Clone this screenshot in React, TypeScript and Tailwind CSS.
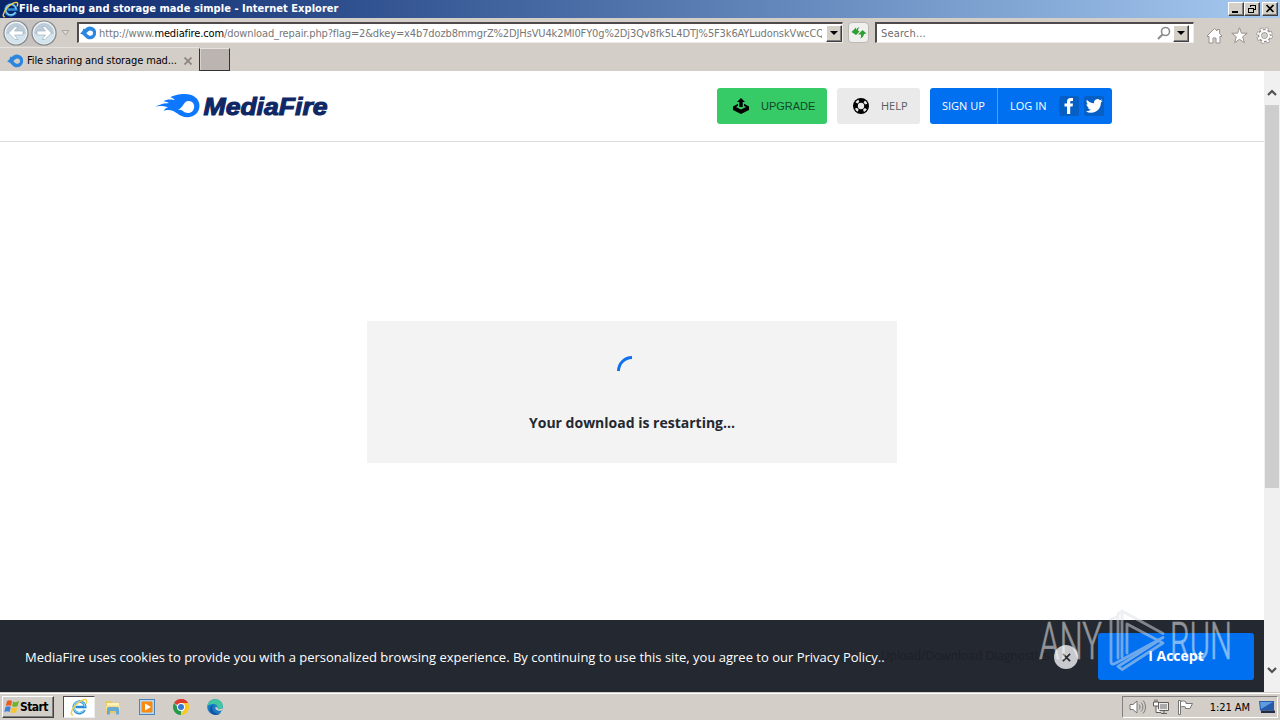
import React from 'react';

const TAHOMA = "font-['DejaVu_Sans_Condensed','DejaVu_Sans',sans-serif] [font-stretch:condensed]";

const IeIcon = ({ className }: { className?: string }) => (
  <svg viewBox="0 0 18 18" className={className} fill="none">
    <path d="M14.6 12A5.800 5.800 0 1 1 15.200 9H5.500" stroke="#2b8ad6" strokeWidth="2.600" />
    <path d="M14.3 11.8A5.600 5.600 0 1 1 15 8.800" stroke="#8ad4f8" strokeWidth="1.200" />
    <path d="M3.2 16.8C.2 17.2.7 12.8 5 7.8 9.6 2.6 15.3.3 16.4 2.2c.5.9.1 2.200-.6 3.600" stroke="#f2d24a" strokeWidth="1.500" />
  </svg>
);

const FlameIcon = ({ className }: { className?: string }) => (
  <svg viewBox="0 0 16 14" className={className}>
    <path
      fill="#2b86e0"
      fillRule="evenodd"
      d="M0 7.500C2.500 6 3 4 3.500 2.500L5 3C6 1.500 8 .5 9.800.5a6.300 6.300 0 1 1 0 12.800C6 13.300 5 10 2.500 8.500ZM6 7c1 0 1.800 2.800 4.300 2.800a2.700 2.700 0 1 0 0-5.400C8.500 4.400 7.500 6.500 6 7Z"
    />
  </svg>
);

const BackArrow = ({ flip }: { flip?: boolean }) => (
  <svg viewBox="0 0 26 26" className={flip ? 'w-[26px] h-[26px] -scale-x-100' : 'w-[26px] h-[26px]'}>
    <circle cx="13" cy="13" r="12" fill="#eef2f5" stroke="#85898f" strokeWidth="1.200" />
    <circle cx="13" cy="13" r="10" fill="#bccbd8" />
    <path d="M3 14a10 10 0 0 0 20 0Z" fill="#d3e4ec" />
    <path d="M5.500 13l6.500-6.500h3L11.500 11H20v4h-8.500l3.500 4.500h-3Z" fill="#fff" stroke="#a0b2c2" strokeWidth=".7" />
  </svg>
);

const DropButton = () => (
  <div className="w-4 h-[17px] shrink-0 bg-[#d4d0c8] border border-t-white border-l-white border-r-[#404040] border-b-[#404040] flex items-center justify-center shadow-[inset_-1px_-1px_0_#808080]">
    <svg viewBox="0 0 8 4" className="w-2 h-1">
      <path d="M0 0h8L4 4Z" fill="#000" />
    </svg>
  </div>
);

const WindowButton = ({ children }: { children: React.ReactNode }) => (
  <div className="w-4 h-3.5 bg-[#d4d0c8] border border-t-white border-l-white border-r-[#404040] border-b-[#404040] shadow-[inset_-1px_-1px_0_#808080]">
    <svg viewBox="0 0 14 12" className="w-3.5 h-3" fill="none" stroke="#000">
      {children}
    </svg>
  </div>
);

const TitleBar = () => (
  <div className="h-[18px] flex items-center pl-0.5 pr-0.5 bg-gradient-to-r from-[#0a246a] to-[#a6caf0]">
    <IeIcon className="w-[17px] h-[17px]" />
    <span className={`${TAHOMA} font-bold text-[11px] text-white whitespace-nowrap tracking-[0.035px] mt-px`}>
      File sharing and storage made simple - Internet Explorer
    </span>
    <div className="ml-auto flex">
      <WindowButton><path d="M3 9h6" strokeWidth="2" /></WindowButton>
      <WindowButton>
        <path d="M5.500 4V2.500h5v4H9M5 2h6M3.500 5.500h5v4h-5ZM3 5h6" shapeRendering="crispEdges" />
      </WindowButton>
      <span className="w-0.5" />
      <WindowButton><path d="M3.500 2l7 7M10.500 2l-7 7" strokeWidth="1.700" /></WindowButton>
    </div>
  </div>
);

const NavBar = () => (
  <div className={`h-[29px] flex items-center pl-[3px] bg-[#d4cec8] ${TAHOMA} text-[11px]`}>
    <div className="flex gap-0.5 rounded-full bg-[#c6c2bf] mt-px">
      <BackArrow />
      <BackArrow flip />
    </div>
    <svg viewBox="0 0 9 6" className="w-[9px] h-1.5 mx-1">
      <path d="M1 .5h7L4.500 5Z" fill="#ddd9d5" stroke="#aaa5a0" />
    </svg>
    <div className="w-[766px] h-[21px] ml-[3px] shrink-0 flex items-center bg-white border-t-2 border-l-2 border-t-[#504a4c] border-l-[#504a4c] border-b border-r border-b-[#efebe6] border-r-[#efebe6]">
      <FlameIcon className="w-4 h-3.5 ml-px mr-[3px] shrink-0" />
      <span className="mt-0.5 w-[723px] overflow-hidden whitespace-nowrap text-[#777] tracking-[-0.125px]">
        http://www.<span className="text-black">mediafire.com</span>
        /download_repair.php?flag=2&amp;dkey=x4b7dozb8mmgrZ%2DJHsVU4k2Ml0FY0g%2Dj3Qv8fk5L4DTJ%5F3k6AYLudonskVwcCQ
      </span>
      <div className="ml-auto"><DropButton /></div>
    </div>
    <div className="w-[21px] h-[21px] ml-[5px] shrink-0 rounded-sm border border-[#bcb7b2] bg-[#f0f0ee] flex items-center justify-center">
      <svg viewBox="0 0 16 14" className="w-4 h-3.5" fill="#2f9e33">
        <path d="M.5 6.500L5 2V4.500Q6 2 8.500 1.500Q6.500 3.500 7 5L8.500 6L5 9.500Z" transform="translate(0 -.5)" />
        <path d="M7 8.500L11.500 4L15.500 7.500L13 8Q12.500 11.500 9 12.500Q10.500 10.500 10 8.500Z" />
      </svg>
    </div>
    <div className="w-[319px] h-[21px] ml-1.5 shrink-0 flex items-center bg-white border-t-2 border-l-2 border-t-[#504a4c] border-l-[#504a4c] border-b border-r border-b-[#efebe6] border-r-[#efebe6]">
      <span className="ml-1 mt-0.5 text-[#6d6d6d] tracking-[0.15px]">Search...</span>
      <svg viewBox="0 0 14 14" className="w-3.5 h-3.5 ml-auto mr-0.5" fill="none" stroke="#8c8c8c">
        <circle cx="8.500" cy="5.500" r="4" strokeWidth="1.600" />
        <path d="M5.500 8.500L1 13" strokeWidth="2.200" />
      </svg>
      <DropButton />
      <span className="w-1" />
    </div>
    <div className="ml-3 mt-1.5 flex gap-2">
      <svg viewBox="0 0 17 17" className="w-[17px] h-[17px]" fill="#fff" stroke="#999391">
        <path d="M1 9l7.500-7.500L11 4V2.500h2.500V6.500L16 9l-1 1-1-1v7h-4v-5H7v5H3V9l-1 1Z" />
      </svg>
      <svg viewBox="0 0 17 17" className="w-[17px] h-[17px]" fill="#fff" stroke="#999391">
        <path d="M8.500.8l2 5.400h5.700l-4.500 3.500 1.600 6-4.800-3.400-4.800 3.400 1.600-6L.8 6.200h5.700Z" />
      </svg>
      <svg viewBox="0 0 17 17" className="w-[17px] h-[17px]" fill="none">
        <circle cx="8.500" cy="8.500" r="6.500" stroke="#999391" strokeWidth="3.500" strokeDasharray="3.100 2" />
        <circle cx="8.500" cy="8.500" r="4.600" stroke="#8a8482" strokeWidth="4" />
        <circle cx="8.500" cy="8.500" r="6.300" stroke="#fff" strokeWidth="2.400" strokeDasharray="2.300 2.650" strokeDashoffset="-.3" />
        <circle cx="8.500" cy="8.500" r="4.300" stroke="#fff" strokeWidth="2.200" />
        <circle cx="8.500" cy="8.500" r="2.300" fill="#d4cec8" />
      </svg>
    </div>
  </div>
);

const TabRow = () => (
  <div className={`h-6 flex bg-[#d4cec8] border-b border-[#d4cec8] ${TAHOMA} text-[11px]`}>
    <div className="w-[199px] flex items-center pl-[7px] border-t border-[#e6e2de]">
      <FlameIcon className="w-4 h-3.5 mr-1 mt-[3px]" />
      <span className="mt-1 text-black whitespace-nowrap tracking-[-0.12px]">File sharing and storage mad...</span>
      <svg viewBox="0 0 8 8" className="w-2 h-2 ml-auto mr-[7px] mt-[3px]">
        <path d="M.5.5l7 7M7.500.5l-7 7" stroke="#8b8583" strokeWidth="1.800" />
      </svg>
    </div>
    <div className="w-[31px] h-[23px] mt-px bg-[#bcb4b0] border border-[#333] border-t-[#e6e2de] shadow-[inset_1px_0_0_#d8d2ce]" />
  </div>
);

const Logo = () => (
  <svg viewBox="0 0 176 26" className="w-44 h-[26px] overflow-visible">
    <path
      fill="#0d78ff"
      fillRule="evenodd"
      d="M0 13.500C4 12.200 8 10 12.500 10.200c1 .1 1.400-.3.500-.8-1.700-.9-3.500-1-5-.7C12 6 15.500 6.500 19 7c.8 0 .5-.6-.4-1.300-1-.7-2.200-1.200-3.400-1.500C19 2.600 23 1 30 1c8 0 14.500 4.500 14.500 11.800 0 6.500-5.200 11.400-12 11.400-9.500 0-11-7.200-19.500-7.200-1.800 0-3 .4-4.200.8.8-2 2.500-3 4.300-3.500C9 13 4 12.500 0 13.500Zm22.500 3c5.500-.2 6 3.500 10.500 3.500 3.600 0 6.200-3 6.200-6.600 0-3.300-2.500-5.500-5.700-5.500-5.500 0-5 7.600-11 8.600Z"
    />
    <text
      x="48.500"
      y="22"
      textLength="124"
      lengthAdjust="spacingAndGlyphs"
      fontFamily="Liberation Sans, sans-serif"
      fontWeight="700"
      fontStyle="italic"
      fontSize="24.500"
      fill="#0f2765"
      stroke="#0f2765"
      strokeWidth="1.100"
    >
      MediaFire
    </text>
  </svg>
);

const SiteHeader = () => (
  <div className="h-[71px] shrink-0 flex items-center border-b border-[#dcdcdc] bg-white pl-[155px] pr-[152px] text-[11px]">
    <Logo />
    <div className="ml-auto flex gap-2.5 h-9">
      <div className="w-[110px] rounded-[3px] bg-[#37cb68] text-[#12462a] flex items-center pl-4 font-['Liberation_Sans',sans-serif]">
        <svg viewBox="0 0 16 16" className="w-4 h-4 mr-3" fill="#000">
          <path d="M8 0l4 4H9.700v5H6.300V4H4Z" />
          <path d="M5 5.800L0 8.500V12l8 4 8-4V8.500l-5-2.700v2L13 9l-5 2.500L3 9l2-1.200Z" />
        </svg>
        UPGRADE
      </div>
      <div className="w-[83px] rounded-[3px] bg-[#eaeaea] text-[#565b63] flex items-center pl-4 font-['Open_Sans',sans-serif]">
        <svg viewBox="0 0 16 16" className="w-4 h-4 mr-3" fill="none">
          <circle cx="8" cy="8" r="8" fill="#000" />
          <circle cx="8" cy="8" r="5.500" stroke="#eaeaea" strokeWidth="2.400" strokeDasharray="3 5.639" strokeDashoffset="-2.800" />
          <circle cx="8" cy="8" r="3.200" fill="#eaeaea" />
        </svg>
        HELP
      </div>
      <div className="w-[182px] rounded-[3px] bg-[#0070f0] text-white flex items-center font-['Open_Sans',sans-serif]">
        <div className="w-[68px] h-full flex items-center pl-3 border-r border-[#4a9cff]">SIGN UP</div>
        <span className="ml-3 mr-3">LOG IN</span>
        <svg viewBox="0 0 20 20" className="w-5 h-5 mr-[5px]">
          <rect width="20" height="20" rx="2" fill="#065fc4" />
          <path d="M8 18v-7.500H5.500v-3H8V5.700C8 3.200 9.400 2 11.700 2h2.300v2.900h-1.500c-1 0-1.300.5-1.300 1.300v1.300H14l-.4 3h-2.400V18Z" fill="#fff" />
        </svg>
        <svg viewBox="0 0 20 20" className="w-5 h-5">
          <rect width="20" height="20" rx="2" fill="#065fc4" />
          <path transform="translate(1.800 1.500) scale(.7)" fill="#fff" d="M24 4.560c-.880.390-1.830.650-2.830.770 1.020-.610 1.800-1.570 2.160-2.720-.950.560-2 .970-3.120 1.190A4.920 4.920 0 0 0 11.820 8.290C7.730 8.090 4.100 6.130 1.670 3.150.380 5.350 1 8.250 3.190 9.720c-.8-.030-1.560-.250-2.230-.610-.050 2.280 1.580 4.410 3.950 4.890-.690.190-1.450.230-2.220.080.620 1.960 2.440 3.380 4.600 3.420A9.900 9.900 0 0 1 0 19.540 13.900 13.900 0 0 0 7.550 21.750c9.140 0 14.310-7.720 13.990-14.650A10 10 0 0 0 24 4.560Z" />
        </svg>
      </div>
    </div>
  </div>
);

const DownloadPanel = () => (
  <div className="w-[530px] h-[142px] mx-auto bg-[#f3f3f3] flex flex-col items-center pt-[34px]">
    <svg viewBox="0 0 32 32" className="w-8 h-8">
      <path d="M2.500 16A13.500 13.500 0 0 1 16 2.500" fill="none" stroke="#0f70ee" strokeWidth="3" />
    </svg>
    <span className="mt-[26px] text-sm leading-5 font-bold text-[#242830] font-['Open_Sans',sans-serif]">
      Your download is restarting...
    </span>
  </div>
);

const CookieBar = () => (
  <div className="h-[72px] mt-auto shrink-0 flex items-center bg-[#242830] pl-[25px] pr-2.5 font-['Open_Sans',sans-serif] text-[13px] text-white">
    <span className="mt-[3px] whitespace-nowrap">
      MediaFire uses cookies to provide you with a personalized browsing experience. By continuing to use this site, you agree to our Privacy Policy..
    </span>
    <span className="-ml-1 whitespace-nowrap text-[#1d2027] text-xs">Upload/Download Diagnostics</span>
    <div className="ml-auto -mr-0 flex items-center">
      <div className="w-6 h-6 -ml-4 mt-0.5 relative rounded-full bg-[#c8cacd] flex items-center justify-center">
        <svg viewBox="0 0 10 10" className="w-[9px] h-[9px]">
          <path d="M1 1l8 8M9 1L1 9" stroke="#242830" strokeWidth="1.800" />
        </svg>
      </div>
      <div className="ml-5 w-[156px] h-[47px] rounded-[3px] bg-[#0070f0] flex items-center justify-center font-bold text-sm">I Accept</div>
    </div>
  </div>
);

const Scrollbar = () => (
  <div className="w-4 shrink-0 bg-[#f0f0f0] flex flex-col items-center">
    <svg viewBox="0 0 10 7" className="w-2.5 h-[7px] mt-[18px] mb-[9px] shrink-0">
      <path d="M1 6l4-4 4 4" fill="none" stroke="#505050" strokeWidth="2.200" />
    </svg>
    <div className="w-3.5 h-[383px] bg-[#cdcdcd]" />
    <svg viewBox="0 0 10 7" className="w-2.5 h-[7px] mt-auto mb-[18px] shrink-0">
      <path d="M1 1l4 4 4-4" fill="none" stroke="#505050" strokeWidth="2.200" />
    </svg>
  </div>
);

const Watermark = () => (
  <svg viewBox="0 0 200 66" className="absolute left-[1036px] top-[608px] w-[200px] h-[66px] opacity-50 overflow-visible">
    <g fill="#fff" stroke="#fff" strokeWidth=".6" fontFamily="Roboto, sans-serif" fontWeight="300" fontSize="51">
      <text x="3" y="51" textLength="63" lengthAdjust="spacingAndGlyphs">ANY</text>
      <text x="134" y="51" textLength="62" lengthAdjust="spacingAndGlyphs">RUN</text>
    </g>
    <g fill="none" stroke="#dde1e8" strokeWidth="2.800" strokeLinejoin="round" strokeLinecap="round">
      <path d="M81 9l-6 2v43q0 3 4 1.500L127 29.500" />
      <path d="M127 25.500L86 3v46M86 3l-4 3v44" />
      <path d="M91 45V16l36 19L86 61.500l-4-3 40-25.500" />
    </g>
  </svg>
);

const Taskbar = () => (
  <div className={`h-7 shrink-0 flex items-center border-t border-[#d4cec8] bg-[#d4cec8] shadow-[inset_0_1px_0_#fff] pl-0.5 ${TAHOMA} text-[11px] text-black`}>
    <div className="w-[52px] h-[22px] flex items-center pl-px border border-t-white border-l-white border-r-[#404040] border-b-[#404040] shadow-[inset_-1px_-1px_0_#808080]">
      <svg viewBox="0 0 16 16" className="w-4 h-4 shrink-0">
        <path d="M3 2c2-1.200 3.500-1 5 0L7 7C5.300 6 3.700 6 1.800 7Z" fill="#e95b24" />
        <path d="M9 2.500c2 1 4 .8 6-.5l-1.300 5c-2 1.200-3.800 1-5.600.3Z" fill="#72b32e" />
        <path d="M1.500 8c2-1 3.500-1 5.200 0l-1.200 5C4 12 2.200 12 .3 13Z" fill="#3c82d8" />
        <path d="M7.700 8.500c2 .8 3.700.8 5.700-.3l-1.300 5c-2 1.100-3.900 1-5.600 0Z" fill="#f9c42c" />
      </svg>
      <span className="font-bold text-xs tracking-[-0.6px]">Start</span>
    </div>
    <div className="w-8 h-[22px] ml-[9px] bg-white border border-t-[#504a4c] border-l-[#504a4c] border-b-[#eee] border-r-[#eee] flex items-center justify-center">
      <IeIcon className="w-[18px] h-[18px]" />
    </div>
    <svg viewBox="0 0 16 16" className="w-4 h-4 ml-[10px]">
      <path d="M1 2h5l1 1.500h7.500V14H1Z" fill="#e9c867" />
      <path d="M2 4h12v4H2Z" fill="#fff5bc" />
      <path d="M1 6.500h14V12H1Z" fill="#f3dd8b" />
      <path d="M2 15.500V10c0-1.200 1-2 2-2h8c1 0 2 .8 2 2v5.500h-3V12H5v3.500Z" fill="#67aad4" />
    </svg>
    <svg viewBox="0 0 16 16" className="w-4 h-4 ml-[18px]">
      <rect x=".5" y=".5" width="15" height="15" fill="#b9d7f1" stroke="#4b83bd" />
      <rect x="2.500" y="2.500" width="11" height="11" rx="1" fill="#f78b12" />
      <path d="M6 4.500l6 3.500-6 3.500Z" fill="#fff" />
    </svg>
    <svg viewBox="0 0 16 16" className="w-4 h-4 ml-[18px]">
      <path d="M8 8L1.070 4A8 8 0 0 1 14.930 4Z" fill="#de3b2e" />
      <path d="M8 8V0a8 8 0 0 1 6.930 4H8Z" fill="#de3b2e" />
      <path d="M8 8h-3.500L1.070 4A8 8 0 0 0 8 16Z" fill="#279a4a" />
      <path d="M8 4h6.930A8 8 0 0 1 8 16l3.500-6Z" fill="#fbc91c" />
      <circle cx="8" cy="8" r="4" fill="#fff" />
      <circle cx="8" cy="8" r="3" fill="#3775d6" />
    </svg>
    <svg viewBox="0 0 16 16" className="w-4 h-4 ml-[18px]">
      <circle cx="8" cy="8" r="7.800" fill="#1879c5" />
      <path d="M.5 7C1 2.500 4.500.2 8.500.2c4.500 0 7.300 3 7.300 6.500 0 2.500-2 4-4.200 4-1.500 0-2.200-.7-1.400-1.700C11 7.500 9.500 5 6.500 5 3.500 5 1.500 6 .5 7Z" fill="#42c5a0" />
      <path d="M6.500 5.500C4.500 7 4.500 11 7.500 13.500c2 1.700 4.500 1.500 6.500.3-3.500 3.500-9 2.500-10.500-1.300C2.200 9.500 4 6.500 6.500 5.500Z" fill="#12519d" />
      <path d="M9 7.500c-1.500 1.500-.5 5 5.500 4.200l1.500-2.500-4.500 1.200Z" fill="#d4cec8" />
    </svg>
    <div className="ml-auto mr-0.5 w-[156px] h-[22px] flex items-center pl-1.5 border border-t-[#858080] border-l-[#858080] border-b-white border-r-white">
      <svg viewBox="0 0 18 16" className="w-[18px] h-4" fill="#fff" stroke="#777">
        <path d="M1 5.500h3L8 2v12l-4-3.500H1Z" />
        <path d="M10 5.500c1.300 1.300 1.300 3.700 0 5M12 3.500c2.500 2.500 2.500 6.500 0 9M14 1.500c3.300 3.500 3.300 9.500 0 13" fill="none" />
      </svg>
      <svg viewBox="0 0 17 16" className="w-[17px] h-4 ml-1.5" fill="#eee" stroke="#615d5b">
        <path d="M5.500 3.500h10v8h-10ZM8 14.500h6M11 11.500v3" />
        <path d="M7 5h7v5H7Z" fill="#aaa" stroke="none" />
        <path d="M.5 3h5v4h-5ZM2 3V.5M4 3V.5M3 7v6.500h5" fill="#fff" />
      </svg>
      <svg viewBox="0 0 17 16" className="w-[17px] h-4 ml-[7px]" fill="#fff" stroke="#777">
        <path d="M1.500 1.500h2v14h-2ZM3.500 2.500c2-1 4-.5 5.500.5v1.500h6.500L13 9.500H8.500V8c-2-.8-3.500-.5-5 0Z" />
      </svg>
      <span className="ml-auto mt-[3px] tracking-[-0.05px]">1:21 AM</span>
      <svg viewBox="0 0 16 14" className="w-4 h-3.5 ml-[9px] mr-0.5">
        <path d="M0 1h15v9.500H1Z" fill="#265ba9" />
        <path d="M1 2h13L2 9Z" fill="#5e9be0" />
        <path d="M2 10.500h14V13H2Z" fill="#202d4a" />
      </svg>
    </div>
  </div>
);

export default function App() {
  return (
    <div className="relative w-[1280px] h-[720px] overflow-hidden flex flex-col bg-white">
      <TitleBar />
      <NavBar />
      <TabRow />
      <div className="h-[621px] flex">
        <div className="flex-1 min-w-0 flex flex-col">
          <SiteHeader />
          <div className="pt-[179px]">
            <DownloadPanel />
          </div>
          <CookieBar />
        </div>
        <Scrollbar />
      </div>
      <Taskbar />
      <Watermark />
    </div>
  );
}
